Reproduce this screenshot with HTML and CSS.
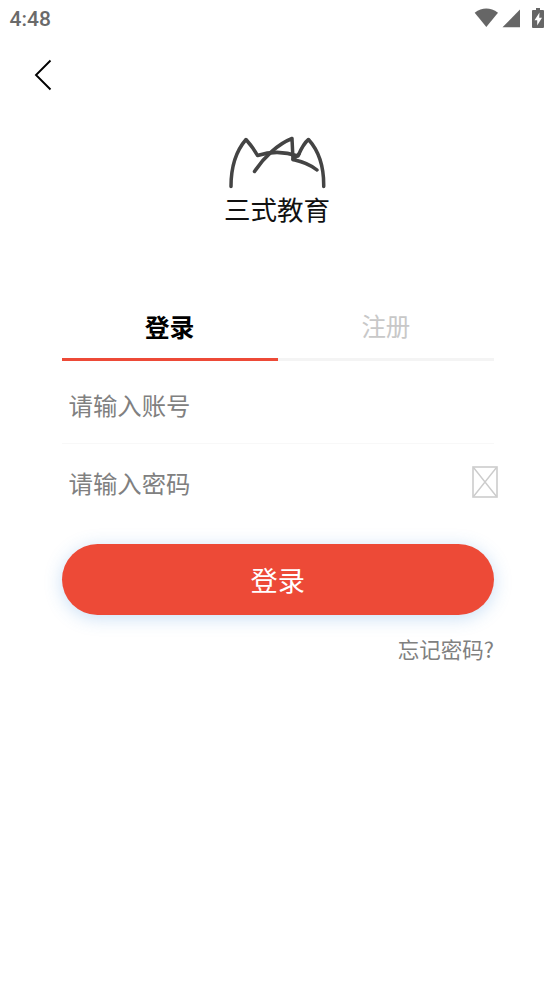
FILE: index.html
```html
<!DOCTYPE html>
<html lang="zh-CN">
<head>
<meta charset="utf-8">
<title>登录</title>
<link rel="stylesheet" href="styles.css">
</head>
<body>
<div class="status">
  <span class="clock">4:48</span>
  <svg class="status-icons" width="72" height="24" viewBox="0 0 72 24" fill="#666">
    <path d="M.7 4.800Q12.200-3.600 24 4.800L12.300 19Z"/>
    <path d="M46 1.500V19.300H28.500Z"/>
    <path fill-rule="evenodd" d="M62 0h4v2h3q1 0 1 1v16q0 1-1 1H59q-1 0-1-1V3q0-1 1-1h3ZM65.500 4.500L60.500 12.200h2.700V17.500L68 9.700H65.200Z"/>
  </svg>
</div>
<header class="nav">
  <svg width="18" height="32" viewBox="0 0 18 32" fill="none" stroke="#000" stroke-width="1.900"><path d="M16.500 1.500L2 16L16.500 30.500"/></svg>
</header>
<div class="brand">
  <svg width="135" height="72" viewBox="0 0 135 72" fill="none" stroke="#444" stroke-width="3.500" stroke-linecap="round" stroke-linejoin="round">
    <path d="M21 66.500C21 46 26 31 36 19.500C40 24 44 29 47.500 35.500C60 31.500 75 31.500 88 36C91 29 94 23 98.500 19.500C108 30 114 46 113.700 66.500"/>
    <path d="M44.500 51.500C54 37 68 24 82 18.500L83 39.500C92 41.500 101 45 107 50"/>
    <path d="M83 39.500L89 34"/>
  </svg>
  <div class="brand-name">三式教育</div>
</div>
<main class="panel">
  <div class="tabs">
    <div class="tab active">登录</div>
    <div class="tab">注册</div>
  </div>
  <div class="field account"><input type="text" placeholder="请输入账号"></div>
  <div class="field password">
    <input type="password" placeholder="请输入密码">
    <svg width="26" height="32" viewBox="0 0 26 32" fill="none" stroke="#ccc"><path d="M1.500 1.500L24.500 30.500M24.500 1.500L1.500 30.500" stroke-width="1.400"/><rect x="1" y="1" width="24" height="30" stroke-width="1.600"/></svg>
  </div>
  <button class="submit">登录</button>
  <div class="forgot">忘记密码?</div>
</main>
</body>
</html>
```
FILE: styles.css
```css
* { box-sizing: border-box; }
body {
  margin: 0;
  min-height: 984px;
  background: #fff;
  font-family: "Noto Sans CJK SC", sans-serif;
}
svg { display: block; flex: none; }
.status {
  height: 38px;
  padding: 0 8px 0 9.5px;
  display: flex;
  justify-content: space-between;
  align-items: center;
}
.clock { font: 500 21px/38px Roboto, sans-serif; color: #6a6a6a; }
.status-icons { margin-top: 2px; }
.nav { height: 74px; padding: 21px 0 0 34px; }
.brand {
  height: 188px;
  padding-top: 8px;
  display: flex;
  flex-direction: column;
  align-items: center;
}
.brand-name { margin-top: -1px; font-size: 26.5px; line-height: 36px; color: #111; }
.panel { margin: 0 60px 0 61.5px; }
.tabs { display: flex; height: 61px; }
.tab {
  flex: 1;
  padding-top: 8px;
  border-bottom: 3px solid #f4f4f4;
  text-align: center;
  font-size: 24.5px;
  line-height: 36px;
  color: #c8c8c8;
}
.tab.active { border-color: #ed4a37; color: #000; font-size: 24.9px; font-weight: 700; }
.field { display: flex; align-items: center; padding-left: 7px; }
.account { height: 83px; padding-top: 4px; border-bottom: 1px solid #f8f8f8; }
.password { height: 75px; margin-right: -3.5px; }
.field input {
  flex: 1;
  min-width: 0;
  height: 40px;
  padding: 0;
  border: 0;
  outline: 0;
  background: none;
  font: 24.4px/36px "Noto Sans CJK SC", sans-serif;
}
.password input { height: 42px; padding-top: 2px; }
.field input::placeholder { color: #808080; opacity: 1; }
.submit {
  display: block;
  width: 100%;
  height: 71px;
  margin-top: 25px;
  padding: 0 0 1px;
  border: 0;
  border-radius: 36px;
  background: #ed4a37;
  box-shadow: 0 3px 18px rgba(60, 140, 220, .28);
  color: #fff;
  font: 27.2px/40px "Noto Sans CJK SC", sans-serif;
}
.forgot { margin-top: 18px; text-align: right; font-size: 21.5px; line-height: 32px; color: #808080; }
```
